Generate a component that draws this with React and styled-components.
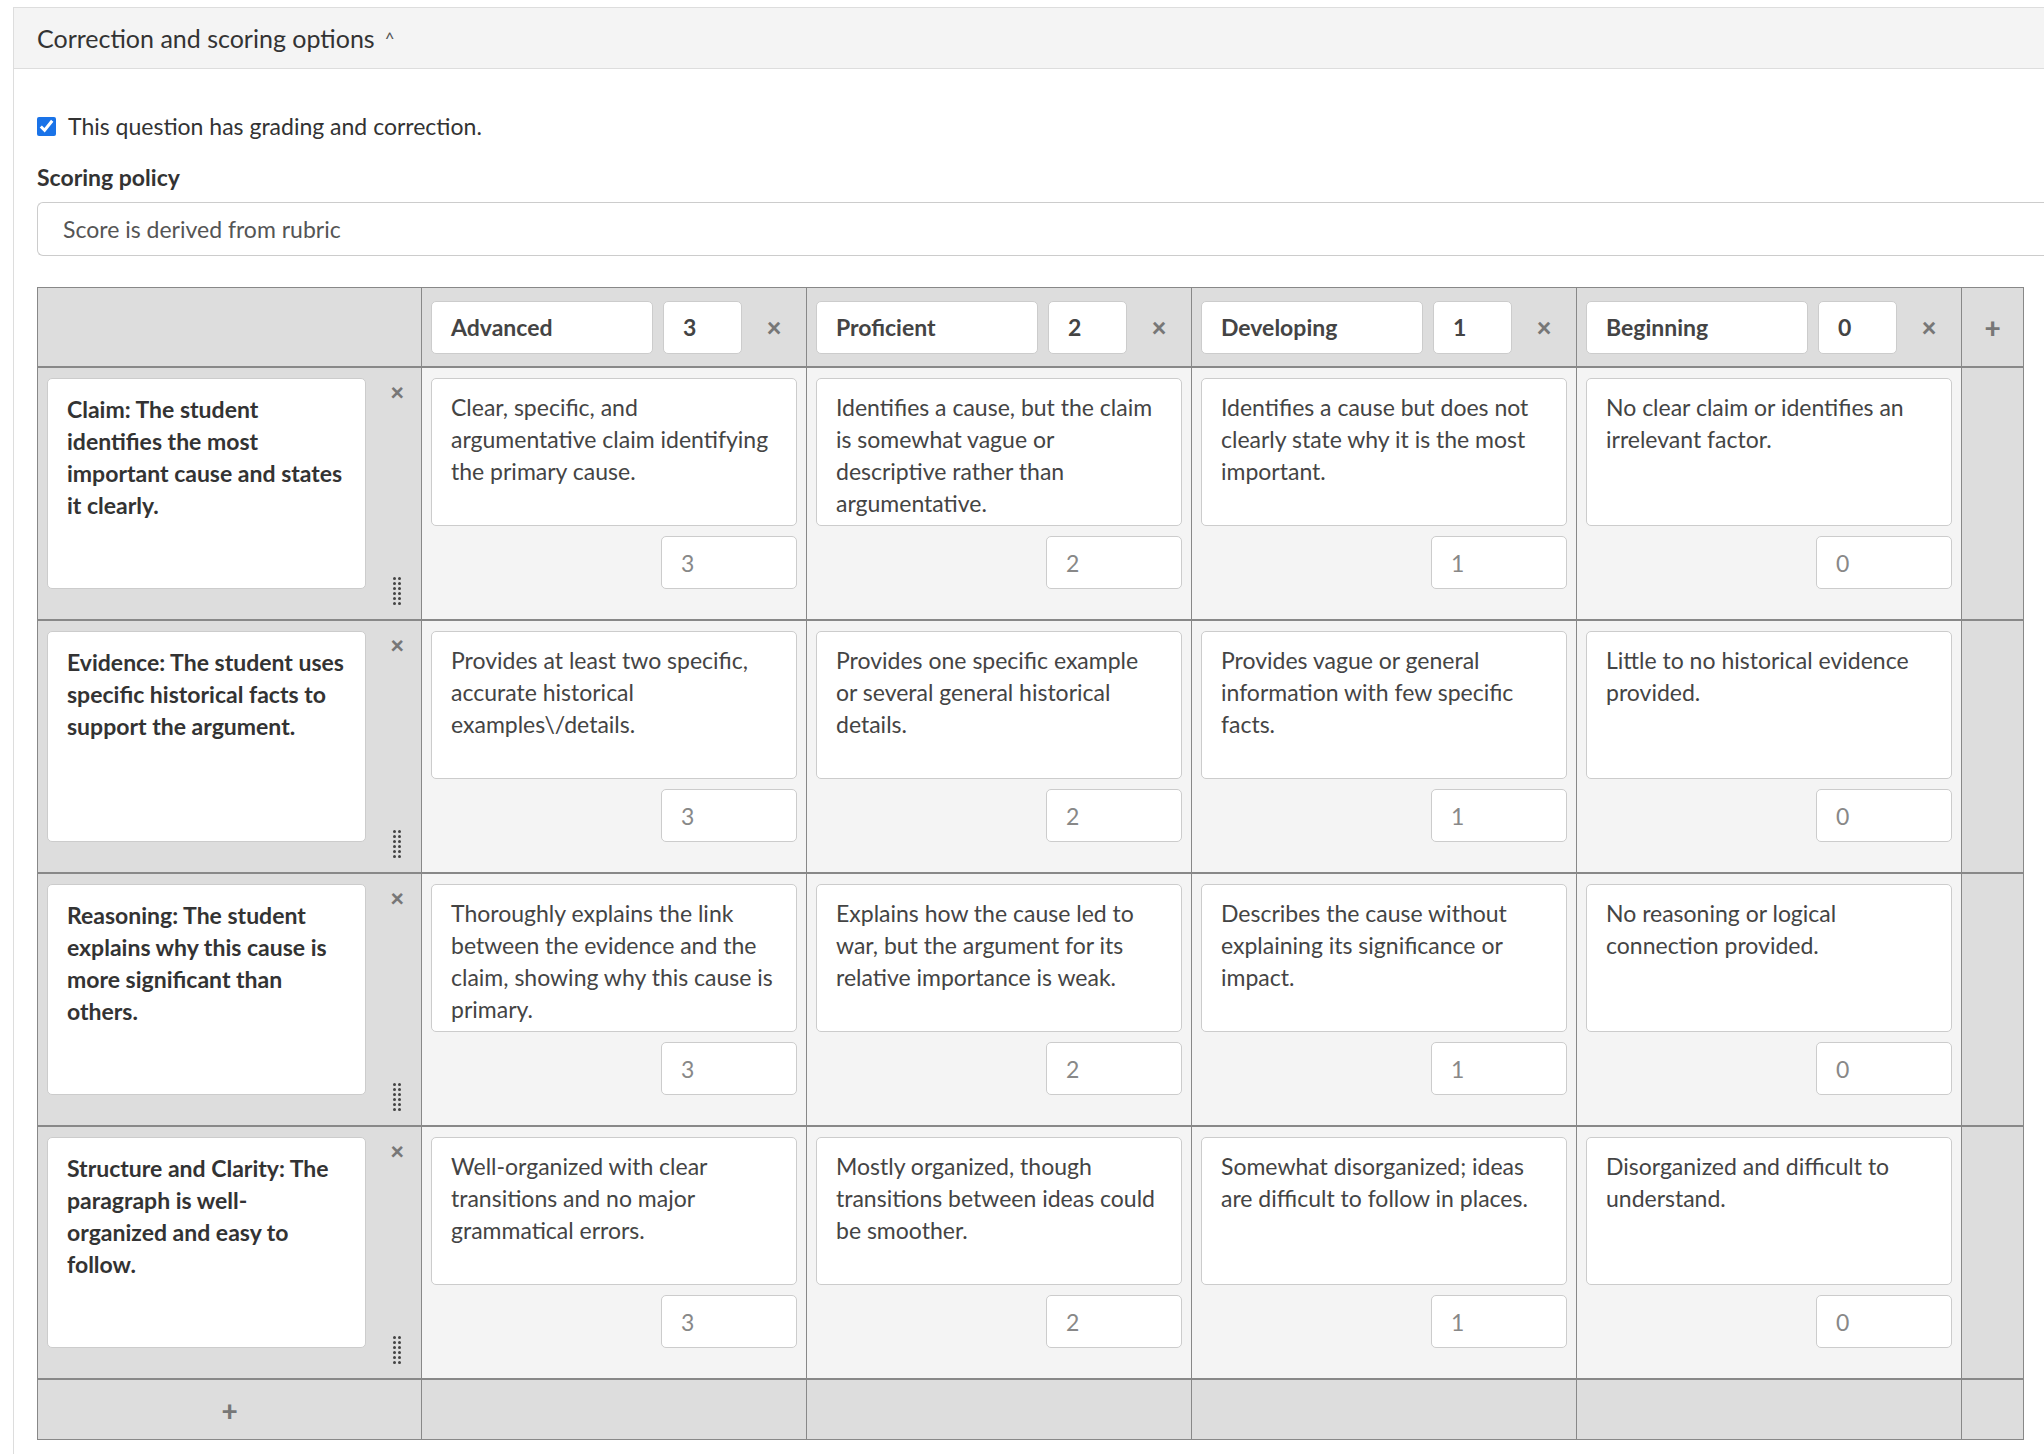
import styled, { createGlobalStyle } from 'styled-components'

const GlobalStyle = createGlobalStyle`
  body {
    margin: 0;
    background: #fff;
    font-family: Lato, "Open Sans", sans-serif;
    color: #333;
  }
`

const Panel = styled.section`
  margin: 7px 0 0 13px;
  border-left: 1px solid #ddd;
  border-top: 1px solid #ddd;
  min-height: 1447px;
`

const PanelHeader = styled.div`
  height: 60px;
  background: #f4f4f4;
  border-bottom: 1px solid #ddd;
  display: flex;
  align-items: center;
  padding-left: 23px;
  font-size: 25px;
  gap: 10px;
`

const Caret = styled.span`
  font-size: 17px;
  color: #555;
`

const PanelBody = styled.div`
  padding: 40px 0 0 23px;
`

const CheckRow = styled.label`
  display: flex;
  align-items: center;
  gap: 12px;
  font-size: 23px;
  height: 34px;

  input {
    width: 19px;
    height: 19px;
    margin: 0;
    accent-color: #1a73e8;
  }
`

const Label = styled.div`
  font-weight: 700;
  font-size: 23px;
  margin-top: 20px;
`

const Select = styled.div`
  margin-top: 11px;
  height: 52px;
  border: 1px solid #ccc;
  border-right: none;
  border-radius: 6px 0 0 6px;
  display: flex;
  align-items: center;
  padding-left: 25px;
  font-size: 23px;
  color: #555;
`

const Table = styled.div`
  margin-top: 31px;
  width: 1985px;
  display: grid;
  grid-template-columns: 384px repeat(4, 385px) 61px;
  grid-template-rows: 80px repeat(4, 253px) 59px;
  border: 1px solid #888;
  font-size: 23px;
`

const Cell = styled.div`
  background: ${p => (p.$light ? '#f4f4f4' : '#dddddd')};
  border-right: ${p => (p.$last ? 'none' : '1px solid #888')};
  border-bottom: ${p => (p.$bottom ? 'none' : '2px solid #888')};
  padding: 10px 9px 10px 9px;
  display: flex;
  flex-direction: ${p => (p.$column ? 'column' : 'row')};
  align-items: ${p => (p.$center ? 'center' : 'stretch')};
  justify-content: ${p => (p.$center ? 'center' : 'flex-start')};
  gap: 10px;
`

const Box = styled.div`
  background: #fff;
  border: 1px solid #ccc;
  border-radius: 5px;
  box-sizing: border-box;
  line-height: 32px;
  color: #444;
`

const HeaderName = styled(Box)`
  width: 222px;
  height: 53px;
  display: flex;
  align-items: center;
  padding-left: 19px;
  font-weight: 700;
  align-self: center;
`

const HeaderPoints = styled(HeaderName)`
  width: 79px;
`

const IconBtn = styled.span`
  color: #777;
  font-weight: 900;
  font-size: ${p => (p.$size || 26)}px;
  width: 44px;
  display: flex;
  align-items: center;
  justify-content: center;
  align-self: center;
`

const Criterion = styled(Box)`
  width: 322px;
  height: 211px;
  padding: 14px 19px;
  font-weight: 700;
  color: #333;
`

const SideTools = styled.div`
  display: flex;
  flex-direction: column;
  justify-content: space-between;
  align-items: center;
  width: 30px;
  padding: 2px 0 4px 6px;
`

const Close = styled.span`
  color: #777;
  font-weight: 900;
  font-size: 24px;
  line-height: 24px;
`

const Grip = styled.div`
  display: grid;
  grid-template-columns: 3px 3px;
  gap: 2px;
  span {
    width: 3px;
    height: 3px;
    background: #444;
    border-radius: 50%;
  }
`

const Desc = styled(Box)`
  height: 148px;
  padding: 12px 19px;
`

const Points = styled(Box)`
  align-self: flex-end;
  width: 136px;
  height: 53px;
  display: flex;
  align-items: center;
  padding-left: 19px;
  color: #888;
`

const levels = [
  ['Advanced', 3],
  ['Proficient', 2],
  ['Developing', 1],
  ['Beginning', 0],
]

const rows = [
  {
    title: 'Claim: The student identifies the most important cause and states it clearly.',
    cells: [
      'Clear, specific, and argumentative claim identifying the primary cause.',
      'Identifies a cause, but the claim is somewhat vague or descriptive rather than argumentative.',
      'Identifies a cause but does not clearly state why it is the most important.',
      'No clear claim or identifies an irrelevant factor.',
    ],
  },
  {
    title: 'Evidence: The student uses specific historical facts to support the argument.',
    cells: [
      'Provides at least two specific, accurate historical examples\\/details.',
      'Provides one specific example or several general historical details.',
      'Provides vague or general information with few specific facts.',
      'Little to no historical evidence provided.',
    ],
  },
  {
    title: 'Reasoning: The student explains why this cause is more significant than others.',
    cells: [
      'Thoroughly explains the link between the evidence and the claim, showing why this cause is primary.',
      'Explains how the cause led to war, but the argument for its relative importance is weak.',
      'Describes the cause without explaining its significance or impact.',
      'No reasoning or logical connection provided.',
    ],
  },
  {
    title: 'Structure and Clarity: The paragraph is well-organized and easy to follow.',
    cells: [
      'Well-organized with clear transitions and no major grammatical errors.',
      'Mostly organized, though transitions between ideas could be smoother.',
      'Somewhat disorganized; ideas are difficult to follow in places.',
      'Disorganized and difficult to understand.',
    ],
  },
]

const App = () => (
  <>
    <GlobalStyle />
    <Panel>
      <PanelHeader>
        Correction and scoring options <Caret>^</Caret>
      </PanelHeader>
      <PanelBody>
        <CheckRow>
          <input type="checkbox" defaultChecked />
          This question has grading and correction.
        </CheckRow>
        <Label>Scoring policy</Label>
        <Select>Score is derived from rubric</Select>

        <Table>
          <Cell />
          {levels.map(([name, pts]) => (
            <Cell key={name}>
              <HeaderName>{name}</HeaderName>
              <HeaderPoints>{pts}</HeaderPoints>
              <IconBtn>×</IconBtn>
            </Cell>
          ))}
          <Cell $last $center>
            <IconBtn $size={28}>+</IconBtn>
          </Cell>

          {rows.map(row => (
            <>
              <Cell key={row.title}>
                <Criterion>{row.title}</Criterion>
                <SideTools>
                  <Close>×</Close>
                  <Grip>
                    {Array.from({ length: 12 }).map((_, i) => <span key={i} />)}
                  </Grip>
                </SideTools>
              </Cell>
              {row.cells.map((text, i) => (
                <Cell key={i} $light $column>
                  <Desc>{text}</Desc>
                  <Points>{levels[i][1]}</Points>
                </Cell>
              ))}
              <Cell $last />
            </>
          ))}

          <Cell $bottom $center>
            <IconBtn $size={28}>+</IconBtn>
          </Cell>
          <Cell $bottom />
          <Cell $bottom />
          <Cell $bottom />
          <Cell $bottom />
          <Cell $bottom $last />
        </Table>
      </PanelBody>
    </Panel>
  </>
)

export default App
